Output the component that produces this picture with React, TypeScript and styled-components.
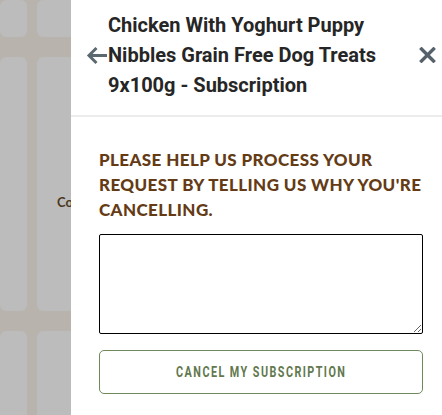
import React from "react";
import styled, { createGlobalStyle } from "styled-components";

const Global = createGlobalStyle`
  html, body { margin: 0; padding: 0; background: #bcbcbc; }
  body { width: 442px; height: 415px; overflow: hidden; }
  * { box-sizing: border-box; }
`;

const Page = styled.div`
  display: flex;
  width: 442px;
  height: 415px;
  overflow: hidden;
`;

const Backdrop = styled.div`
  width: 71px;
  flex: none;
  height: 100%;
  overflow: hidden;
  background: #b8b3ad;
`;

const TileGrid = styled.div`
  display: grid;
  grid-template-columns: 27px 140px;
  grid-template-rows: 37px 254px 120px;
  column-gap: 10px;
  row-gap: 20px;
`;

const Tile = styled.div<{ $offset?: number }>`
  background: #bcbcbc;
  border-radius: 6px;
  display: flex;
  align-items: center;
  padding-left: 20px;
  padding-top: ${(p) => p.$offset ?? 0}px;
  font-family: "Lato", sans-serif;
  font-weight: 700;
  font-size: 13px;
  color: #4a3820;
  white-space: nowrap;
  overflow: hidden;
`;

const Panel = styled.div`
  flex: 1;
  background: #ffffff;
  display: flex;
  flex-direction: column;
`;

const Header = styled.div`
  display: flex;
  align-items: center;
  justify-content: space-between;
  padding: 10px 6px 15px 15px;
  border-bottom: 2px solid #ececec;
`;

const IconButton = styled.button`
  border: none;
  background: none;
  padding: 0;
  display: flex;
  align-items: center;
  justify-content: center;
  color: #5c6870;
  cursor: pointer;
`;

const Title = styled.h1`
  width: 300px;
  flex: none;
  margin: 0 auto 0 1px;
  font-family: "Roboto", sans-serif;
  font-weight: 700;
  font-size: 20px;
  line-height: 30px;
  color: #262626;
`;

const Body = styled.div`
  display: flex;
  flex-direction: column;
  padding: 30px 19px 0 28px;
`;

const Prompt = styled.p`
  margin: 0 0 12px;
  font-family: "Lato", sans-serif;
  font-weight: 900;
  font-size: 17px;
  line-height: 25px;
  letter-spacing: 0.4px;
  text-transform: uppercase;
  color: #643b15;
`;

const Reason = styled.textarea`
  width: 100%;
  height: 100px;
  border: 1px solid #000;
  border-radius: 2px;
  padding: 6px;
  font-family: "Lato", sans-serif;
  font-size: 14px;
  margin: 0 0 16px;
  display: block;
  background: #fff;
`;

const CancelButton = styled.button`
  width: 100%;
  height: 44px;
  border: 1px solid #6e8a5a;
  border-radius: 5px;
  background: #fff;
  display: flex;
  align-items: center;
  justify-content: center;
  padding: 0;
  cursor: pointer;
`;

const CancelLabel = styled.span`
  display: inline-block;
  color: #62784e;
  font-family: "Roboto", sans-serif;
  font-weight: 700;
  font-size: 15px;
  letter-spacing: 2px;
  text-transform: uppercase;
  white-space: nowrap;
  transform: scaleX(0.72);
`;

const BackIcon = () => (
  <svg width="21" height="19" viewBox="0 0 21 19" fill="none" stroke="currentColor" strokeWidth="3" strokeLinecap="butt" strokeLinejoin="miter">
    <path d="M21 9.5H3" />
    <path d="M10.5 2L3 9.5L10.5 17" />
  </svg>
);

const CloseIcon = () => (
  <svg width="17" height="16" viewBox="0 0 17 16" fill="none" stroke="#56626b" strokeWidth="3.4" strokeLinecap="square">
    <path d="M2.5 2L14.5 14" />
    <path d="M14.5 2L2.5 14" />
  </svg>
);

export default function App() {
  return (
    <>
      <Global />
      <Page>
        <Backdrop>
          <TileGrid>
            <Tile />
            <Tile />
            <Tile />
            <Tile $offset={36}>Co</Tile>
            <Tile />
            <Tile />
          </TileGrid>
        </Backdrop>
        <Panel>
          <Header>
            <IconButton aria-label="Back">
              <BackIcon />
            </IconButton>
            <Title>Chicken With Yoghurt Puppy Nibbles Grain Free Dog Treats 9x100g - Subscription</Title>
            <IconButton aria-label="Close">
              <CloseIcon />
            </IconButton>
          </Header>
          <Body>
            <Prompt>Please help us process your request by telling us why you're cancelling.</Prompt>
            <Reason />
            <CancelButton>
              <CancelLabel>Cancel my subscription</CancelLabel>
            </CancelButton>
          </Body>
        </Panel>
      </Page>
    </>
  );
}
